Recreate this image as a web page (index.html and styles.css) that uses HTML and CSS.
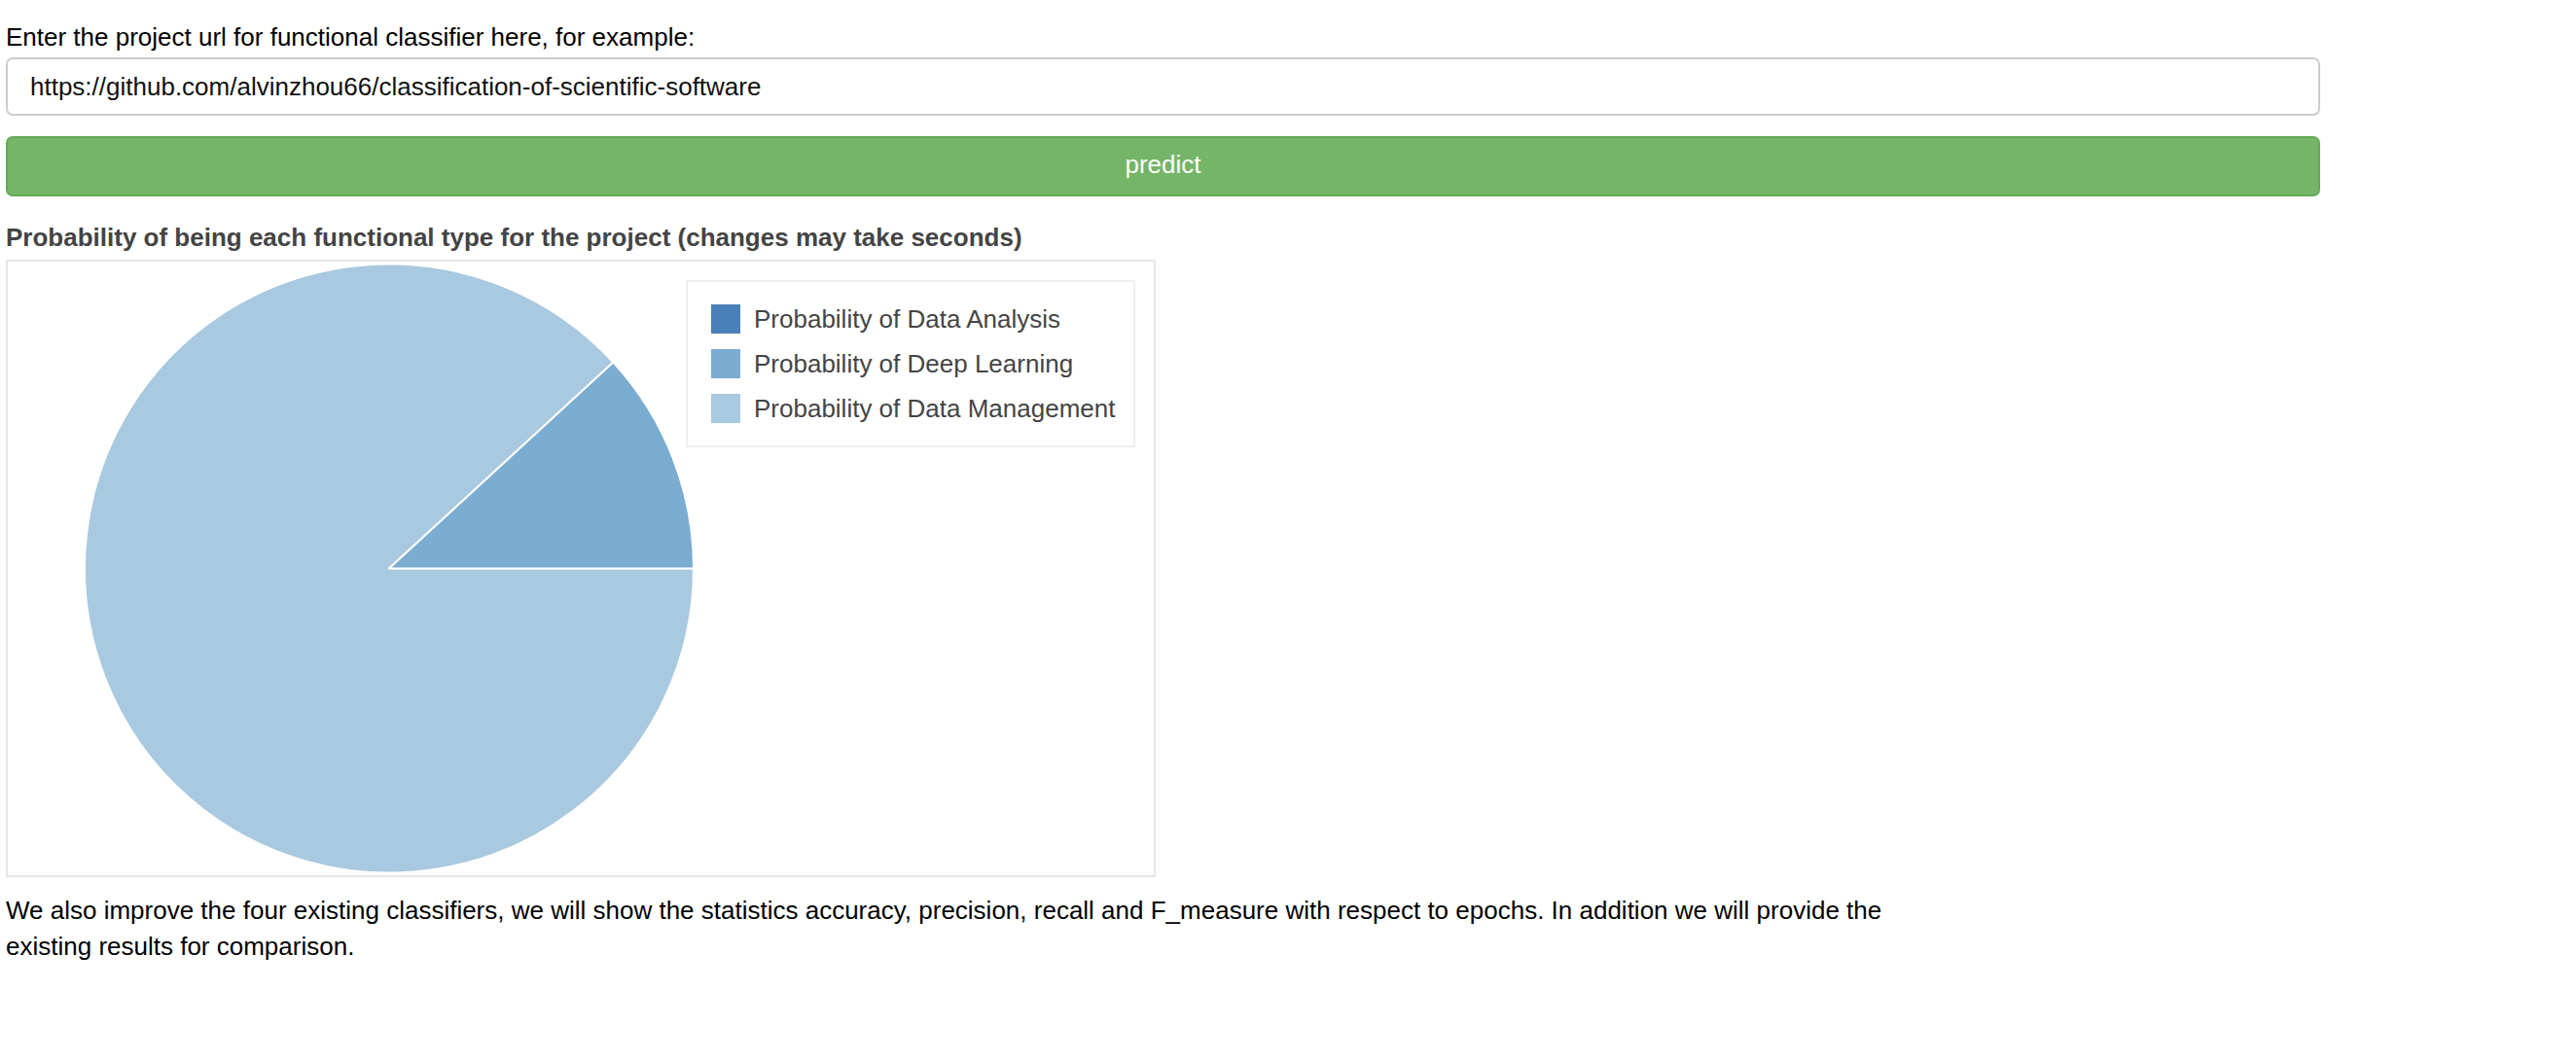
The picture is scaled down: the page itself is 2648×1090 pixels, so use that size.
FILE: index.html
```html
<!DOCTYPE html>
<html lang="en">
<head>
<meta charset="utf-8">
<title>Functional classifier</title>
<link rel="stylesheet" href="styles.css">
</head>
<body>
<main class="page">
  <div class="prompt">Enter the project url for functional classifier here, for example:</div>
  <input class="url-input" type="text" value="https://github.com/alvinzhou66/classification-of-scientific-software">
  <button class="predict-btn" type="button">predict</button>
  <div class="chart-title">Probability of being each functional type for the project (changes may take seconds)</div>
  <div class="chart">
    <svg class="pie" width="1178" height="631" viewBox="0 0 1178 631">
      <path class="slice slice-mgmt" d="M392,315.5 L622.4,103.6 A313,313 0 1,0 705,315.5 Z"/>
      <path class="slice slice-deep" d="M392,315.5 L705,315.5 A313,313 0 0,0 622.4,103.6 Z"/>
    </svg>
    <div class="legend">
      <div class="legend-item"><span class="swatch swatch-analysis"></span><span>Probability of Data Analysis</span></div>
      <div class="legend-item"><span class="swatch swatch-deep"></span><span>Probability of Deep Learning</span></div>
      <div class="legend-item"><span class="swatch swatch-mgmt"></span><span>Probability of Data Management</span></div>
    </div>
  </div>
  <p class="note">We also improve the four existing classifiers, we will show the statistics accuracy, precision, recall and F_measure with respect to epochs. In addition we will provide the existing results for comparison.</p>
</main>
</body>
</html>
```

FILE: styles.css
```css
body {
  margin: 0;
  background: #fff;
  color: #000;
  font-family: "Liberation Sans", Arial, Helvetica, sans-serif;
  font-size: 26px;
  line-height: 37px;
}

.page {
  width: 2379px;
  padding: 20px 0 0 6px;
}

.prompt {
  margin: 0 0 2px;
}

.url-input {
  display: block;
  box-sizing: border-box;
  width: 100%;
  height: 60px;
  margin: 0;
  padding: 0 23px;
  border: 2px solid #cccccc;
  border-radius: 7px;
  background: #fff;
  color: #111;
  font-family: "Liberation Sans", Arial, Helvetica, sans-serif;
  font-size: 26px;
  outline: none;
}

.predict-btn {
  display: block;
  box-sizing: border-box;
  width: 100%;
  height: 62px;
  margin: 21px 0 0;
  padding: 0 0 3px;
  border: 2px solid #66a958;
  border-radius: 7px;
  background: #74b567;
  color: #fff;
  font-family: "Liberation Sans", Arial, Helvetica, sans-serif;
  font-size: 26px;
}

.chart-title {
  margin: 24px 0 4px;
  font-weight: bold;
  color: #444;
}

.chart {
  position: relative;
  box-sizing: border-box;
  width: 1182px;
  height: 635px;
  border: 2px solid #e6e6e6;
}

.pie {
  display: block;
}

.slice {
  stroke: #fff;
  stroke-width: 2;
  stroke-linejoin: round;
}

.slice-mgmt { fill: #a8c9df; }
.slice-deep { fill: #7bacd1; }

.legend {
  position: absolute;
  left: 697px;
  top: 19px;
  box-sizing: border-box;
  width: 462px;
  height: 172px;
  padding: 23px 0 0 24px;
  border: 2px solid #efefef;
  background: #fff;
  display: flex;
  flex-direction: column;
  gap: 16px;
  color: #444;
}

.legend-item {
  display: flex;
  align-items: center;
  gap: 14px;
  height: 30px;
  line-height: 30px;
  white-space: nowrap;
}

.swatch {
  display: block;
  width: 30px;
  height: 30px;
  flex: none;
}

.swatch-analysis { background: #4a80b7; }
.swatch-deep { background: #7bacd1; }
.swatch-mgmt { background: #a8c9df; }

.note {
  width: 1980px;
  margin: 16px 0 0;
}
```
